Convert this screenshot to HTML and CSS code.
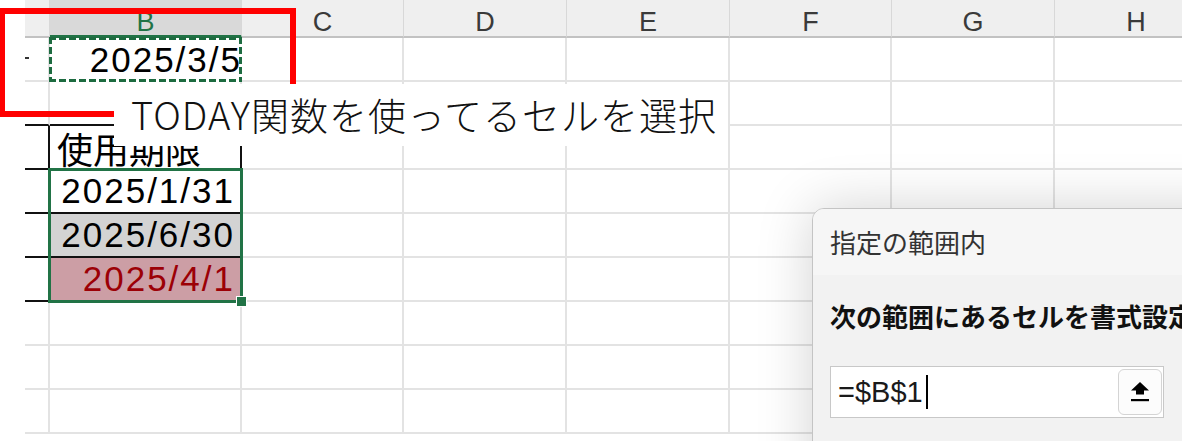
FILE: index.html
```html
<!DOCTYPE html>
<html lang="ja">
<head>
    <meta charset="UTF-8">
    <meta name="viewport" content="width=device-width, initial-scale=1.0">
    <title>条件付き書式</title>
    <link rel="stylesheet" href="styles.css">
</head>
<body>
    <div class="sheet">
        <!-- column headers -->
        <div class="strip"></div>
        <div class="hd"></div>
        <div class="hd hd-sel">B</div>
        <div class="hd">C</div>
        <div class="hd">D</div>
        <div class="hd">E</div>
        <div class="hd">F</div>
        <div class="hd">G</div>
        <div class="hd">H</div>

        <!-- row 1 -->
        <div class="strip"></div>
        <div class="cell a-cut"><span class="cut"></span></div>
        <div class="cell date copied">2025/3/5</div>
        <div class="cell"></div><div class="cell"></div><div class="cell"></div>
        <div class="cell"></div><div class="cell"></div><div class="cell"></div>

        <!-- row 2 -->
        <div class="strip"></div>
        <div class="cell line-b"></div>
        <div class="cell line-b"></div>
        <div class="cell"></div><div class="cell"></div><div class="cell"></div>
        <div class="cell"></div><div class="cell"></div><div class="cell"></div>

        <!-- row 3 -->
        <div class="strip"></div>
        <div class="cell line-b line-r"></div>
        <div class="cell line-b line-r title">使用期限</div>
        <div class="cell"></div><div class="cell"></div><div class="cell"></div>
        <div class="cell"></div><div class="cell"></div><div class="cell"></div>

        <!-- row 4 -->
        <div class="strip"></div>
        <div class="cell line-b line-r"></div>
        <div class="cell line-b line-r date inset active">
            2025/1/31
            <!-- selected range B4:B6 -->
            <div class="selection"><span class="handle"></span></div>
        </div>
        <div class="cell"></div><div class="cell"></div><div class="cell"></div>
        <div class="cell"></div><div class="cell"></div><div class="cell"></div>

        <!-- row 5 -->
        <div class="strip"></div>
        <div class="cell line-b line-r"></div>
        <div class="cell line-b line-r date inset tint-gray">2025/6/30</div>
        <div class="cell"></div><div class="cell"></div><div class="cell"></div>
        <div class="cell"></div><div class="cell"></div><div class="cell"></div>

        <!-- row 6 -->
        <div class="strip"></div>
        <div class="cell line-b line-r"></div>
        <div class="cell line-b line-r date inset tint-red">2025/4/1</div>
        <div class="cell"></div><div class="cell"></div><div class="cell"></div>
        <div class="cell"></div><div class="cell"></div><div class="cell"></div>

        <!-- rows 7-9 -->
        <div class="strip"></div>
        <div class="cell"></div><div class="cell"></div>
        <div class="cell"></div><div class="cell"></div><div class="cell"></div>
        <div class="cell"></div><div class="cell"></div><div class="cell"></div>

        <div class="strip"></div>
        <div class="cell"></div><div class="cell"></div>
        <div class="cell"></div><div class="cell"></div><div class="cell"></div>
        <div class="cell"></div><div class="cell"></div><div class="cell"></div>

        <div class="strip"></div>
        <div class="cell"></div><div class="cell"></div>
        <div class="cell"></div><div class="cell"></div><div class="cell"></div>
        <div class="cell"></div><div class="cell"></div><div class="cell"></div>
    </div>

    <div class="callout-frame"></div>
    <div class="callout">TODAY関数を使ってるセルを選択</div>

    <div class="dialog">
        <div class="dialog-title">指定の範囲内</div>
        <div class="dialog-body">
            <div class="dialog-label">次の範囲にあるセルを書式設定</div>
            <div class="ref-input">
                <span class="ref-text">=$B$1</span><span class="caret"></span>
                <button class="ref-btn" type="button">
                    <svg class="ref-icon" width="22" height="20" viewBox="0 0 22 20">
                        <polygon points="11,0 20,8.5 15,8.5 15,12.5 7,12.5 7,8.5 2,8.5" fill="#000"/>
                        <rect x="2" y="17" width="18" height="2.2" fill="#000"/>
                    </svg>
                </button>
            </div>
        </div>
    </div>
</body>
</html>
```

FILE: styles.css
```css
body {
    margin: 0;
    width: 1182px;
    height: 441px;
    overflow: hidden;
    position: relative;
    background-color: #fff;
    font-family: "Liberation Sans", Arial, sans-serif;
}
.sheet {
    display: grid;
    grid-template-columns: 25px 25px 192px 162px 163px 163px 162px 163px 163px;
    grid-template-rows: 38px repeat(9, 44px);
}
.strip {
    background-color: #fff;
}
.hd {
    box-sizing: border-box;
    background-color: #efefef;
    border-right: 1px solid #d8d8d8;
    border-bottom: 2px solid #c2c2c2;
    color: #3a3a3a;
    font-size: 27px;
    text-align: center;
    line-height: 26px;
    padding-top: 9px;
}
.hd-sel {
    background-color: #d9d9d9;
    color: #217346;
    border-bottom: 3px solid #217346;
}
.cell {
    box-sizing: border-box;
    border-right: 2px solid #e3e3e3;
    border-bottom: 2px solid #e3e3e3;
    display: flex;
    align-items: center;
}
.line-b {
    border-bottom-color: #111;
}
.line-r {
    border-right-color: #111;
}
.a-cut .cut {
    display: block;
    width: 4px;
    height: 2px;
    margin-top: -2px;
    background-color: #333;
}
.date {
    justify-content: flex-end;
    font-size: 35px;
    letter-spacing: 2px;
    color: #000;
    padding-right: 0;
}
.inset {
    padding-right: 5px;
}
.copied {
    margin: -1px 0 0 -1px;
    border: none;
    background-image:
        repeating-linear-gradient(90deg, #1d6b40 0 7px, transparent 7px 10px),
        repeating-linear-gradient(90deg, #1d6b40 0 7px, transparent 7px 10px),
        repeating-linear-gradient(180deg, #1d6b40 0 7px, transparent 7px 10px),
        repeating-linear-gradient(180deg, #1d6b40 0 7px, transparent 7px 10px);
    background-size: 100% 3px, 100% 3px, 3px 100%, 3px 100%;
    background-position: left top, left bottom, left top, right top;
    background-repeat: no-repeat;
}
.title {
    font-family: "Noto Sans CJK JP", sans-serif;
    font-size: 36px;
    color: #000;
    padding-left: 7px;
    padding-top: 2px;
}
.tint-gray {
    background-color: #d3d3d3;
}
.tint-red {
    background-color: #cc9ea5;
    color: #9c0006;
}
.active {
    position: relative;
    z-index: 2;
}
.selection {
    position: absolute;
    left: -2px;
    top: -2px;
    width: 195px;
    height: 135px;
    box-sizing: border-box;
    border: 3px solid #217346;
    pointer-events: none;
}
.handle {
    position: absolute;
    right: -7px;
    bottom: -7px;
    width: 9px;
    height: 9px;
    background-color: #217346;
    border: 1px solid #fff;
}
.callout-frame {
    position: absolute;
    left: -1px;
    top: 8px;
    width: 297px;
    height: 109px;
    box-sizing: border-box;
    border: 6px solid #ff0000;
    z-index: 3;
}
.callout {
    position: absolute;
    left: 114px;
    top: 84px;
    width: 614px;
    height: 62px;
    box-sizing: border-box;
    background-color: #fff;
    padding-left: 17px;
    font-family: "Noto Sans CJK JP", sans-serif;
    font-weight: 300;
    font-size: 38px;
    letter-spacing: 1px;
    line-height: 60px;
    color: #111;
    white-space: nowrap;
    z-index: 4;
}
.dialog {
    position: absolute;
    left: 812px;
    top: 208px;
    width: 440px;
    height: 300px;
    box-sizing: border-box;
    border: 1px solid #c4c4c4;
    border-radius: 12px 12px 0 0;
    background-color: #f2f2f2;
    box-shadow: 0 0 55px rgba(0, 0, 0, 0.18);
    font-family: "Noto Sans CJK JP", sans-serif;
    overflow: hidden;
    z-index: 5;
}
.dialog-title {
    height: 66px;
    background-color: #f6f6f6;
    padding-left: 17px;
    font-size: 26px;
    line-height: 66px;
    color: #333;
}
.dialog-body {
    padding: 24px 0 0 17px;
}
.dialog-label {
    font-size: 26px;
    font-weight: 700;
    line-height: 34px;
    color: #111;
    white-space: nowrap;
}
.ref-input {
    margin-top: 33px;
    width: 334px;
    height: 52px;
    box-sizing: border-box;
    background-color: #fff;
    border: 1px solid #c8c8c8;
    display: flex;
    align-items: center;
    padding-left: 7px;
}
.ref-text {
    font-family: "Liberation Sans", Arial, sans-serif;
    font-size: 29px;
    color: #1a1a1a;
}
.caret {
    width: 2px;
    height: 34px;
    margin-left: 3px;
    background-color: #000;
}
.ref-btn {
    margin-left: auto;
    margin-right: 1px;
    width: 44px;
    height: 46px;
    border: 1px solid #d4d4d4;
    border-radius: 6px;
    background-color: #fcfcfc;
    display: flex;
    align-items: center;
    justify-content: center;
    padding: 0;
}
.ref-icon {
    width: 22px;
    height: 20px;
    flex: none;
}
```
